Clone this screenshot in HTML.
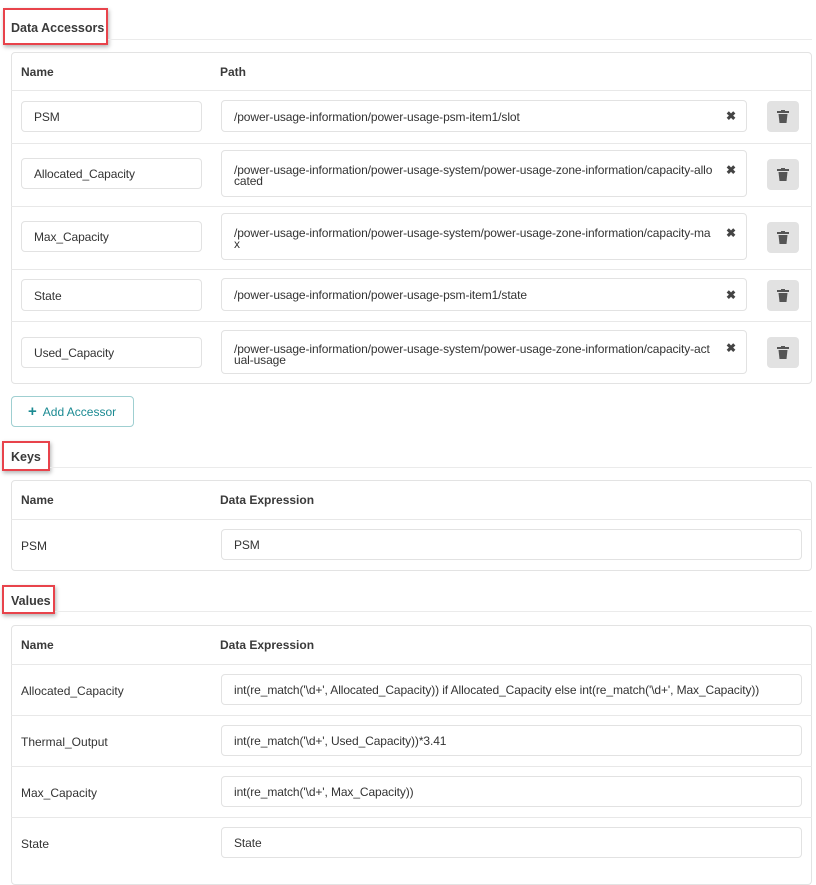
<!DOCTYPE html>
<html><head><meta charset="utf-8"><style>
*{box-sizing:border-box;margin:0;padding:0}
body{width:816px;height:862px;background:#fff;position:relative;overflow:hidden;font-family:"Liberation Sans",sans-serif;color:#333;font-size:12px}
.a{position:absolute}
.h{font-weight:bold;font-size:12.5px;color:#3a3a3a}
.red{position:absolute;border:2.5px solid #e8434b;box-shadow:1px 2px 4px rgba(0,0,0,.3)}
.line{position:absolute;height:1px;background:#ebebeb}
.tbl{position:absolute;border:1px solid #e3e3e3;border-radius:4px;left:11px;width:801px}
.th{position:absolute;font-weight:bold;font-size:12px;color:#3a3a3a}
.sep{position:absolute;left:11px;width:801px;height:1px;background:#e8e8e8}
.in{position:absolute;border:1px solid #e2e2e2;border-radius:4px;background:#fff;font-size:12px;letter-spacing:-0.1px;padding-left:12px;display:flex;align-items:center;line-height:11px;white-space:nowrap;padding-top:2px}
.x{position:absolute;font-size:12px;color:#444;font-weight:bold}
.tr{position:absolute;left:767px;width:32px;height:31px;background:#e2e2e2;border-radius:4px}
.tr svg{position:absolute;left:10px;top:9px}
.lbl{position:absolute;left:21px;font-size:12px}
</style></head><body>

<div class="red" style="left:3px;top:8px;width:105px;height:37px"></div>
<div class="a h" style="left:11px;top:21px">Data Accessors</div>
<div class="line" style="left:108px;top:39px;width:704px"></div>

<div class="tbl" style="top:52px;height:332px"></div>
<div class="th" style="left:21px;top:65px">Name</div>
<div class="th" style="left:220px;top:65px">Path</div>
<div class="sep" style="top:90px"></div>
<div class="sep" style="top:143px"></div>
<div class="sep" style="top:206px"></div>
<div class="sep" style="top:269px"></div>
<div class="sep" style="top:321px"></div>

<div class="in" style="left:21px;top:101px;width:181px;height:31px">PSM</div>
<div class="in" style="left:221px;top:100px;width:526px;height:32px">/power-usage-information/power-usage-psm-item1/slot</div>
<div class="x" style="left:726px;top:109px">✖</div>
<div class="tr" style="top:101px"><svg width="12" height="13" viewBox="0 0 12 13"><rect x="0" y="1" width="12" height="2" fill="#555"/><rect x="4" y="0" width="4" height="2" fill="#555"/><path d="M1.5 4h9l-1 9h-7z" fill="#555"/></svg></div>

<div class="in" style="left:21px;top:158px;width:181px;height:31px">Allocated_Capacity</div>
<div class="in" style="left:221px;top:150px;width:526px;height:47px;align-items:flex-start;padding-top:14px">/power-usage-information/power-usage-system/power-usage-zone-information/capacity-allo<br>cated</div>
<div class="x" style="left:726px;top:163px">✖</div>
<div class="tr" style="top:159px"><svg width="12" height="13" viewBox="0 0 12 13"><rect x="0" y="1" width="12" height="2" fill="#555"/><rect x="4" y="0" width="4" height="2" fill="#555"/><path d="M1.5 4h9l-1 9h-7z" fill="#555"/></svg></div>

<div class="in" style="left:21px;top:221px;width:181px;height:31px">Max_Capacity</div>
<div class="in" style="left:221px;top:213px;width:526px;height:47px;align-items:flex-start;padding-top:14px">/power-usage-information/power-usage-system/power-usage-zone-information/capacity-ma<br>x</div>
<div class="x" style="left:726px;top:226px">✖</div>
<div class="tr" style="top:222px"><svg width="12" height="13" viewBox="0 0 12 13"><rect x="0" y="1" width="12" height="2" fill="#555"/><rect x="4" y="0" width="4" height="2" fill="#555"/><path d="M1.5 4h9l-1 9h-7z" fill="#555"/></svg></div>

<div class="in" style="left:21px;top:279px;width:181px;height:32px">State</div>
<div class="in" style="left:221px;top:278px;width:526px;height:33px">/power-usage-information/power-usage-psm-item1/state</div>
<div class="x" style="left:726px;top:288px">✖</div>
<div class="tr" style="top:280px"><svg width="12" height="13" viewBox="0 0 12 13"><rect x="0" y="1" width="12" height="2" fill="#555"/><rect x="4" y="0" width="4" height="2" fill="#555"/><path d="M1.5 4h9l-1 9h-7z" fill="#555"/></svg></div>

<div class="in" style="left:21px;top:337px;width:181px;height:31px">Used_Capacity</div>
<div class="in" style="left:221px;top:330px;width:526px;height:44px;align-items:flex-start;padding-top:13px">/power-usage-information/power-usage-system/power-usage-zone-information/capacity-act<br>ual-usage</div>
<div class="x" style="left:726px;top:341px">✖</div>
<div class="tr" style="top:337px"><svg width="12" height="13" viewBox="0 0 12 13"><rect x="0" y="1" width="12" height="2" fill="#555"/><rect x="4" y="0" width="4" height="2" fill="#555"/><path d="M1.5 4h9l-1 9h-7z" fill="#555"/></svg></div>

<div class="a" style="left:11px;top:396px;width:123px;height:31px;border:1px solid #9fcfd1;border-radius:4px;color:#1b8a92;font-size:12px;display:flex;align-items:center;padding-left:16px"><span style="font-weight:bold;font-size:15px;margin-right:6px">+</span>Add Accessor</div>

<div class="red" style="left:2px;top:441px;width:48px;height:30px"></div>
<div class="a h" style="left:11px;top:450px">Keys</div>
<div class="line" style="left:50px;top:467px;width:762px"></div>

<div class="tbl" style="top:480px;height:91px"></div>
<div class="th" style="left:21px;top:493px">Name</div>
<div class="th" style="left:220px;top:493px">Data Expression</div>
<div class="sep" style="top:519px"></div>
<div class="lbl" style="top:539px">PSM</div>
<div class="in" style="left:221px;top:529px;width:581px;height:31px">PSM</div>

<div class="red" style="left:2px;top:585px;width:53px;height:29px"></div>
<div class="a h" style="left:11px;top:594px">Values</div>
<div class="line" style="left:55px;top:611px;width:757px"></div>

<div class="tbl" style="top:625px;height:260px"></div>
<div class="th" style="left:21px;top:638px">Name</div>
<div class="th" style="left:220px;top:638px">Data Expression</div>
<div class="sep" style="top:664px"></div>
<div class="sep" style="top:715px"></div>
<div class="sep" style="top:766px"></div>
<div class="sep" style="top:817px"></div>

<div class="lbl" style="top:684px">Allocated_Capacity</div>
<div class="in" style="left:221px;top:674px;width:581px;height:31px">int(re_match('\d+', Allocated_Capacity)) if Allocated_Capacity else int(re_match('\d+', Max_Capacity))</div>
<div class="lbl" style="top:735px">Thermal_Output</div>
<div class="in" style="left:221px;top:725px;width:581px;height:31px">int(re_match('\d+', Used_Capacity))*3.41</div>
<div class="lbl" style="top:786px">Max_Capacity</div>
<div class="in" style="left:221px;top:776px;width:581px;height:31px">int(re_match('\d+', Max_Capacity))</div>
<div class="lbl" style="top:837px">State</div>
<div class="in" style="left:221px;top:827px;width:581px;height:31px">State</div>
</body></html>
